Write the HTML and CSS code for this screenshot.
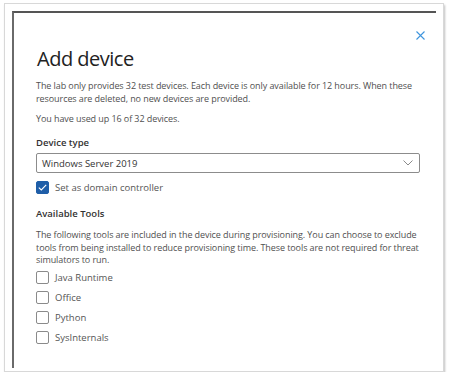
FILE: index.html
```html
<!DOCTYPE html>
<html lang="en">
<head>
    <meta charset="UTF-8">
    <meta name="viewport" content="width=device-width, initial-scale=1.0">
    <title>Add device</title>
    <link rel="stylesheet" href="styles.css">
</head>
<body>
    <div class="frame">
        <div class="panel">
            <div class="panel-header">
                <button class="close" aria-label="Close">
                    <svg width="9" height="9" viewBox="0 0 9 9">
                        <path d="M0.5 0.5 L8.5 8.5 M8.5 0.5 L0.5 8.5" stroke="#3f95dd" stroke-width="1.1" fill="none"/>
                    </svg>
                </button>
            </div>
            <div class="content">
                <h1>Add device</h1>
                <p class="intro">The lab only provides 32 test devices. Each device is only available for 12 hours. When these resources are deleted, no new devices are provided.</p>
                <p class="usage">You have used up 16 of 32 devices.</p>

                <label class="field-label">Device type</label>
                <div class="select">
                    <span>Windows Server 2019</span>
                    <svg width="10" height="6" viewBox="0 0 10 6">
                        <path d="M0.5 0.5 L5 5 L9.5 0.5" stroke="#8a8a8a" stroke-width="1" fill="none"/>
                    </svg>
                </div>

                <div class="check-row dc">
                    <span class="box checked">
                        <svg width="9" height="7" viewBox="0 0 9 7">
                            <path d="M0.8 3.6 L3.3 6 L8.2 0.8" stroke="#fff" stroke-width="1.1" fill="none"/>
                        </svg>
                    </span>
                    <span class="check-text">Set as domain controller</span>
                </div>

                <h2>Available Tools</h2>
                <p class="tools-info">The following tools are included in the device during provisioning. You can choose to exclude tools from being installed to reduce provisioning time. These tools are not required for threat simulators to run.</p>

                <div class="tools">
                    <div class="check-row"><span class="box"></span><span class="check-text">Java Runtime</span></div>
                    <div class="check-row"><span class="box"></span><span class="check-text">Office</span></div>
                    <div class="check-row"><span class="box"></span><span class="check-text">Python</span></div>
                    <div class="check-row"><span class="box"></span><span class="check-text">SysInternals</span></div>
                </div>
            </div>
        </div>
    </div>
</body>
</html>
```

FILE: styles.css
```css
body {
    margin: 0;
    background-color: #fff;
    font-family: "Open Sans", "Noto Sans", sans-serif;
    color: #444;
}
.frame {
    width: 440px;
    height: 369px;
    margin: 3px 0 0 4px;
    box-sizing: border-box;
    background-color: #fff;
    border: 1px solid #d8d8d8;
    box-shadow: 1px 2px 2px rgba(0, 0, 0, 0.25);
    padding: 7px 7px 0 7px;
}
.panel {
    height: 355px;
    border-top: 2px solid #555;
    border-left: 2px solid #6a6a6a;
}
.panel-header {
    display: flex;
    justify-content: flex-end;
    padding: 18px 11px 0 0;
    height: 10px;
}
.close {
    border: none;
    background: none;
    padding: 0;
    width: 9px;
    height: 9px;
    display: flex;
}
.content {
    padding: 0 16px 0 22px;
}
h1 {
    margin: 5px 0 0 1px;
    font-size: 20px;
    line-height: 26px;
    font-weight: 400;
    color: #222;
    letter-spacing: -0.5px;
}
p {
    margin: 0;
    font-size: 9px;
    line-height: 13px;
    color: #505050;
    letter-spacing: -0.08px;
}
.intro {
    margin-top: 7px;
}
.usage {
    margin-top: 7px;
}
.field-label {
    display: block;
    margin-top: 11px;
    font-size: 9.5px;
    line-height: 13px;
    font-weight: 600;
    color: #333;
}
.select {
    margin-top: 4px;
    height: 20px;
    box-sizing: border-box;
    border: 1px solid #8c8c8c;
    border-radius: 2px;
    display: flex;
    align-items: center;
    justify-content: space-between;
    padding: 0 6px 0 5px;
    font-size: 9.5px;
    color: #333;
}
.check-row {
    display: flex;
    align-items: center;
    height: 13px;
    margin-top: 7px;
}
.check-row.dc {
    margin-top: 8px;
}
.box {
    width: 13px;
    height: 13px;
    box-sizing: border-box;
    border: 1px solid #8a8a8a;
    border-radius: 2px;
    display: flex;
    align-items: center;
    justify-content: center;
}
.box.checked {
    background-color: #1f5ea8;
    border-color: #1f5ea8;
}
.check-text {
    margin-left: 6px;
    font-size: 9.5px;
    color: #555;
}
h2 {
    margin: 13px 0 0 0;
    font-size: 9.5px;
    line-height: 13px;
    font-weight: 600;
    color: #333;
}
.tools-info {
    margin-top: 9px;
    line-height: 12.5px;
}
.tools .check-row:first-child {
    margin-top: 4px;
}
```
